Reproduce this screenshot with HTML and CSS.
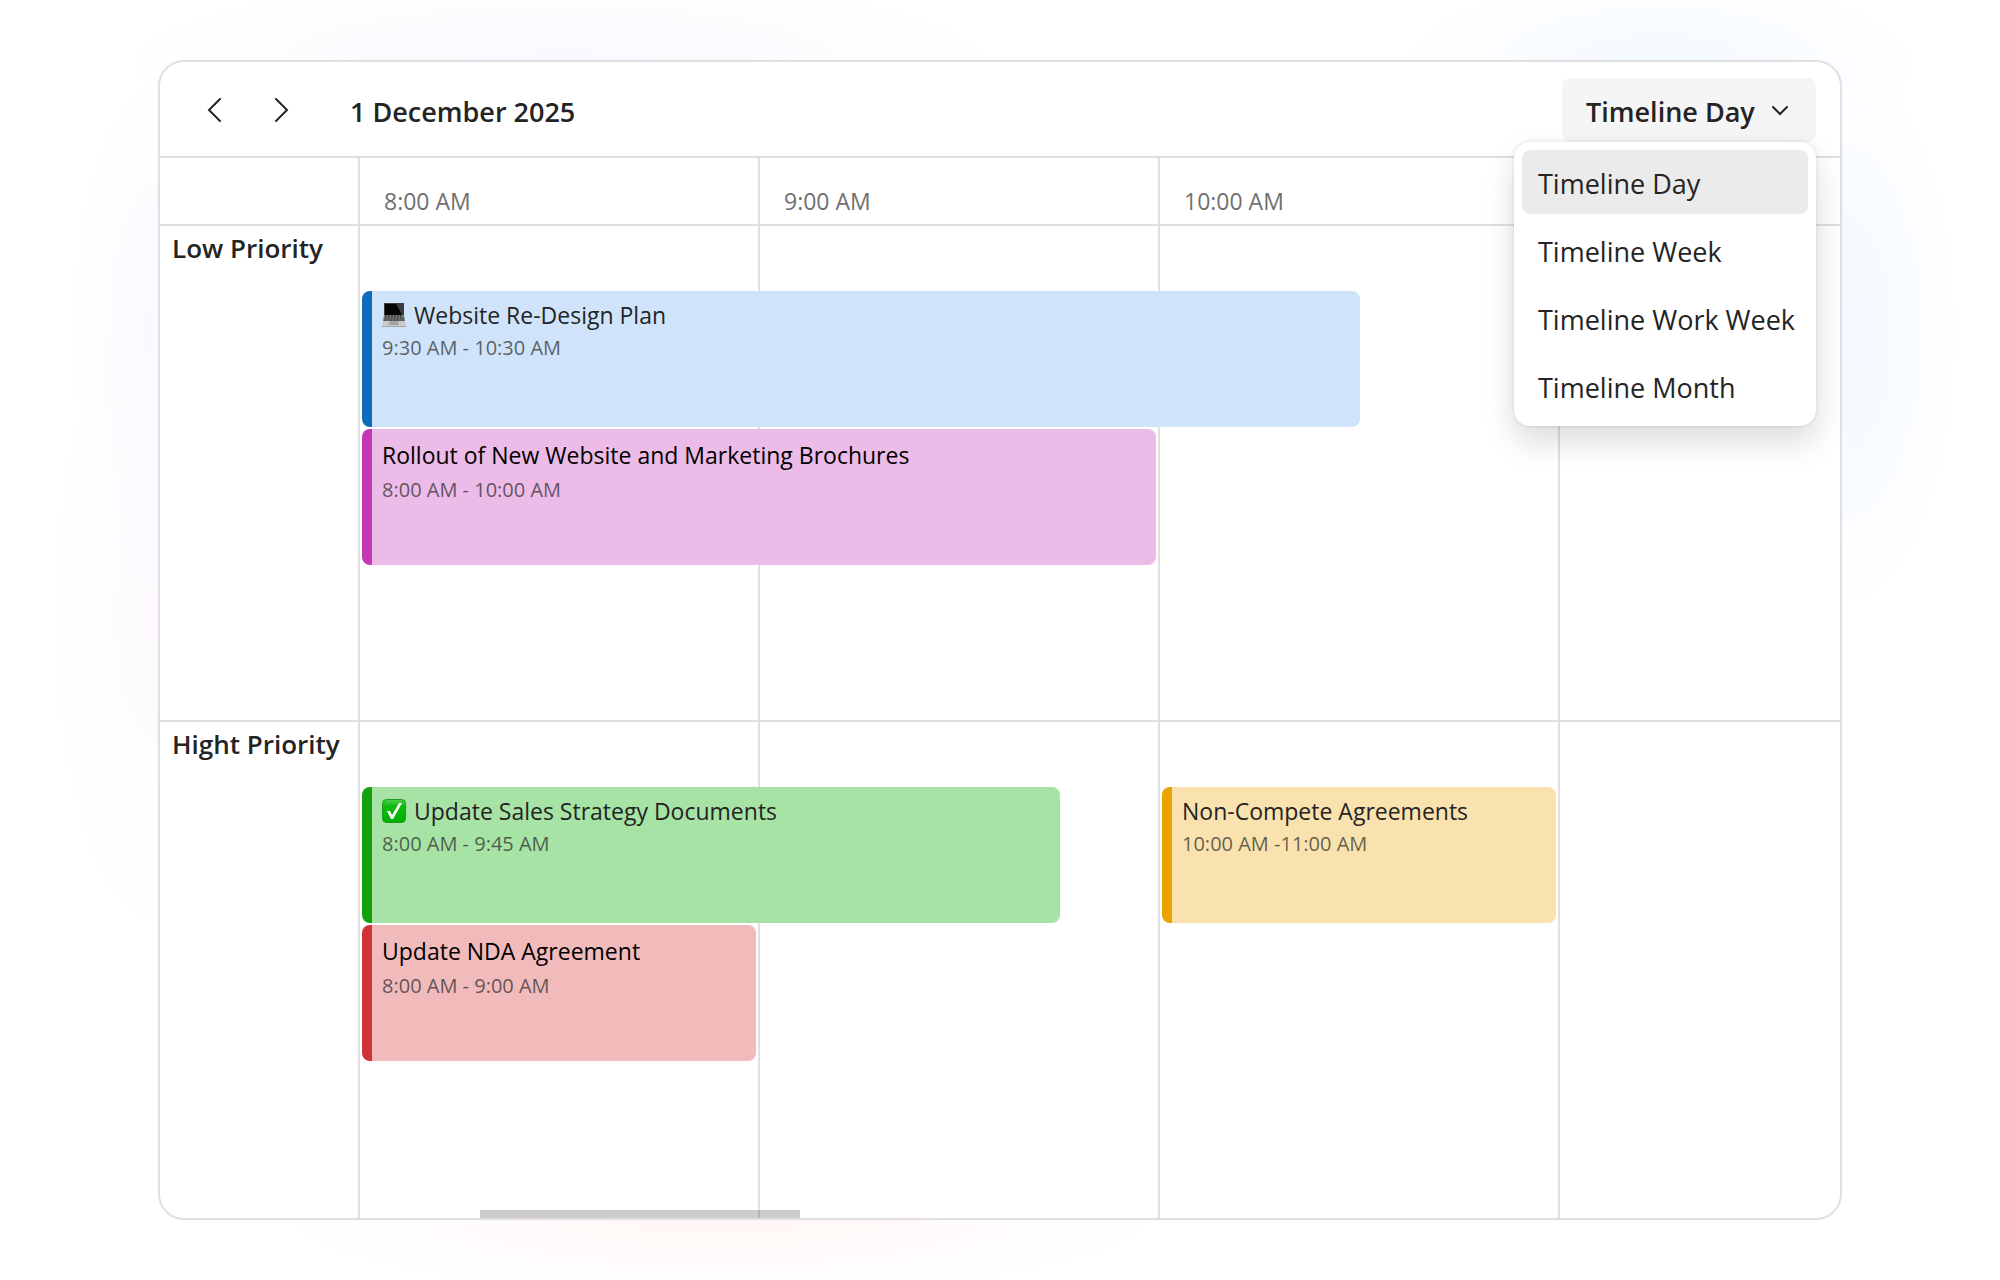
FILE: index.html
```html
<!DOCTYPE html>
<html lang="en">
<head>
  <meta charset="UTF-8" />
  <meta name="viewport" content="width=device-width, initial-scale=1.0"/>
  <title>Scheduler - Timeline Day</title>
  <link rel="stylesheet" href="styles.css">
</head>
<body>

<main class="scheduler">
  <header class="toolbar">
    <button class="nav-btn" aria-label="Previous day">
      <svg width="16" height="26" viewBox="0 0 16 26"><path d="M14 2 3 13l11 11"/></svg>
    </button>
    <button class="nav-btn" aria-label="Next day">
      <svg width="16" height="26" viewBox="0 0 16 26"><path d="M2 2l11 11L2 24"/></svg>
    </button>
    <h1 class="date">1 December 2025</h1>

    <div class="view-picker">
      <button class="view-btn" aria-haspopup="menu" aria-expanded="true" onclick="toggleMenu()">
        Timeline Day
        <svg width="16" height="10" viewBox="0 0 16 10"><path d="M1 1l7 7 7-7"/></svg>
      </button>
      <div class="view-menu" id="viewMenu" role="menu">
        <button class="view-item selected" role="menuitem">Timeline Day</button>
        <button class="view-item" role="menuitem">Timeline Week</button>
        <button class="view-item" role="menuitem">Timeline Work Week</button>
        <button class="view-item" role="menuitem">Timeline Month</button>
      </div>
    </div>
  </header>

  <div class="row hours">
    <div class="group"></div>
    <div class="track">
      <div class="slot slot-1">8:00 AM</div>
      <div class="slot slot-2">9:00 AM</div>
      <div class="slot slot-3">10:00 AM</div>
      <div class="slot slot-4"></div>
    </div>
  </div>

  <section class="row lane">
    <h2 class="group">Low Priority</h2>
    <div class="track">
      <div class="slot slot-1"></div>
      <div class="slot slot-2"></div>
      <div class="slot slot-3"></div>
      <div class="slot slot-4"></div>

      <article class="event blue">
        <h3>
          <svg class="emoji" width="24" height="24" viewBox="0 0 24 24">
            <path d="M2 0h20v12H2z" fill="#3c3c3e"/>
            <path d="M3 1h18v11H3z" fill="#050506"/>
            <path d="M14 1h7v11h-1z" fill="#3a3a3c"/>
            <path d="M2 12h20l1 6H1z" fill="#77787b"/>
            <path d="M3 13h18M3 15h19M2 17h20" stroke="#2a2a2c" stroke-dasharray="2 1"/>
            <path d="M1 18h22l1 5H0z" fill="#cbcbcd"/>
            <path d="M8 18h8l1 4H6z" fill="#a2a2a5"/>
            <path d="M0 23h24v1H0z" fill="#a9a9ab"/>
          </svg>
          Website Re-Design Plan
        </h3>
        <p>9:30 AM - 10:30 AM</p>
      </article>
      <article class="event pink to-line">
        <h3>Rollout of New Website and Marketing Brochures</h3>
        <p>8:00 AM - 10:00 AM</p>
      </article>
    </div>
  </section>

  <section class="row lane">
    <h2 class="group">Hight Priority</h2>
    <div class="track">
      <div class="slot slot-1"></div>
      <div class="slot slot-2"></div>
      <div class="slot slot-3"></div>
      <div class="slot slot-4"></div>

      <article class="event green">
        <h3>
          <svg class="emoji" width="24" height="24" viewBox="0 0 24 24">
            <defs>
              <linearGradient id="tick" x1="0" y1="0" x2="0" y2="1">
                <stop offset="0" stop-color="#4fd04f"/>
                <stop offset=".3" stop-color="#0cbb0c"/>
                <stop offset="1" stop-color="#00b000"/>
              </linearGradient>
            </defs>
            <rect x=".5" y=".5" width="23" height="23" rx="4" fill="url(#tick)" stroke="#1b9a1b"/>
            <path d="M5 12h3l2 4 7-12h3l-9 16h-2z" fill="#fff"/>
          </svg>
          Update Sales Strategy Documents
        </h3>
        <p>8:00 AM - 9:45 AM</p>
      </article>
      <article class="event red to-line">
        <h3>Update NDA Agreement</h3>
        <p>8:00 AM - 9:00 AM</p>
      </article>
      <article class="event yellow to-line">
        <h3>Non-Compete Agreements</h3>
        <p>10:00 AM -11:00 AM</p>
      </article>
    </div>
  </section>

  <div class="scroll-thumb"></div>
</main>

<script>
  function toggleMenu() {
    const menu = document.getElementById("viewMenu");
    menu.hidden = !menu.hidden;
    document.querySelector(".view-btn").setAttribute("aria-expanded", String(!menu.hidden));
  }
</script>

</body>
</html>
```
FILE: styles.css
```css
* {
  box-sizing: border-box;
}

body {
  margin: 0;
  min-height: 100vh;
  padding: 60px 158px;
  display: flex;
  font-family: "Segoe UI", "Open Sans", "Noto Sans", sans-serif;
  color: #242424;
  background:
    radial-gradient(ellipse 440px 90px at 28% 5%, #f8f8ff, transparent),
    radial-gradient(ellipse 260px 90px at 83% 5%, #f3f9ff, transparent),
    radial-gradient(ellipse 120px 280px at 92% 26%, #f1f8ff, transparent),
    radial-gradient(ellipse 90px 260px at 8% 26%, #f8f9ff, transparent),
    radial-gradient(ellipse 110px 320px at 8% 48%, #fdf9fe, transparent),
    radial-gradient(ellipse 440px 80px at 36% 95%, #fff6f5, transparent),
    #fff;
}

h1, h2, h3, p {
  margin: 0;
}

button {
  font: inherit;
  color: inherit;
  border: none;
  background: none;
  cursor: pointer;
}

.scheduler {
  position: relative;
  flex: 1;
  display: flex;
  flex-direction: column;
  border: 2px solid #e0e0e0;
  border-radius: 26px;
  background: #fff;
}

/* toolbar */
.toolbar {
  display: flex;
  align-items: center;
  padding: 16px 24px 14px;
  border-bottom: 2px solid #e0e0e0;
}

.toolbar svg {
  display: block;
  fill: none;
  stroke: #242424;
  stroke-width: 2;
  stroke-linecap: round;
}

.nav-btn {
  padding: 18px 22px;
  margin-right: 8px;
}

.date {
  margin-left: 30px;
  padding-top: 2px;
  font-size: 27px;
  font-weight: 600;
}

.view-picker {
  position: relative;
  margin-left: auto;
}

.view-btn {
  display: flex;
  align-items: center;
  justify-content: space-between;
  width: 254px;
  height: 64px;
  padding: 2px 28px 0 24px;
  border-radius: 8px;
  background: #f5f5f5;
  font-size: 27px;
  font-weight: 600;
}

.view-menu {
  position: absolute;
  top: 100%;
  right: 0;
  z-index: 2;
  display: flex;
  flex-direction: column;
  gap: 4px;
  width: 302px;
  padding: 8px;
  border-radius: 16px;
  background: #fff;
  box-shadow: 0 0 4px rgba(0,0,0,0.12), 0 16px 32px rgba(0,0,0,0.14);
}

.view-menu[hidden] {
  display: none;
}

.view-item {
  height: 64px;
  padding: 2px 16px 0;
  border-radius: 8px;
  font-size: 27px;
  text-align: left;
  white-space: nowrap;
}

.view-item:hover,
.view-item.selected {
  background: #ebebeb;
}

/* rows */
.row {
  display: flex;
}

.lane {
  flex: 1 1 400px;
}

.hours,
.lane:not(:nth-last-child(2)) {
  border-bottom: 2px solid #e0e0e0;
}

.group {
  flex: 0 0 200px;
  padding: 4px 0 0 12px;
  border-right: 2px solid #e0e0e0;
  font-size: 26px;
  line-height: 36px;
  font-weight: 600;
  white-space: nowrap;
}

/* one hour = 20 columns, the last hour is cut off at 14 */
.track {
  flex: 1;
  display: grid;
  grid-template-columns: repeat(74, minmax(0, 1fr));
  grid-template-rows: 63px 136px 136px 1fr;
  row-gap: 2px;
}

.slot {
  grid-row: 1 / -1;
  border-right: 2px solid #e0e0e0;
}

.slot-1 { grid-column: 1 / 21; }
.slot-2 { grid-column: 21 / 41; }
.slot-3 { grid-column: 41 / 61; }
.slot-4 { grid-column: 61 / 75; border-right: none; }

.hours .track {
  grid-template-rows: 66px;
}

.hours .slot {
  padding: 27px 24px 0;
  font-size: 23px;
  line-height: 32px;
  color: #707070;
}

/* events */
.event {
  margin-left: 2px;
  padding: 8px 10px;
  border-left: 10px solid;
  border-radius: 8px;
  white-space: nowrap;
}

.event.to-line {
  margin-right: 4px;
}

.event h3 {
  display: flex;
  align-items: center;
  gap: 8px;
  font-size: 23px;
  line-height: 32px;
  font-weight: 400;
  color: #242424;
}

.event p {
  font-size: 20px;
  line-height: 34px;
  color: rgba(36,36,36,0.7);
}

.blue {
  grid-area: 2 / 1 / 3 / 51;
  background: #cfe4fa;
  border-color: #0f6cbd;
}

.pink {
  grid-area: 3 / 1 / 4 / 41;
  background: #ecbbe7;
  border-color: #c239b3;
}

.green {
  grid-area: 2 / 1 / 3 / 36;
  background: #a7e3a5;
  border-color: #13a10e;
}

.red {
  grid-area: 3 / 1 / 4 / 21;
  background: #f1bbbc;
  border-color: #d13438;
}

.yellow {
  grid-area: 2 / 41 / 3 / 61;
  background: #f9e2ae;
  border-color: #eaa300;
}

.pink h3,
.red h3 {
  line-height: 36px;
  color: #000;
}

.scroll-thumb {
  position: absolute;
  left: 320px;
  bottom: 0;
  width: 320px;
  height: 8px;
  background: rgba(0,0,0,0.2);
}
```
